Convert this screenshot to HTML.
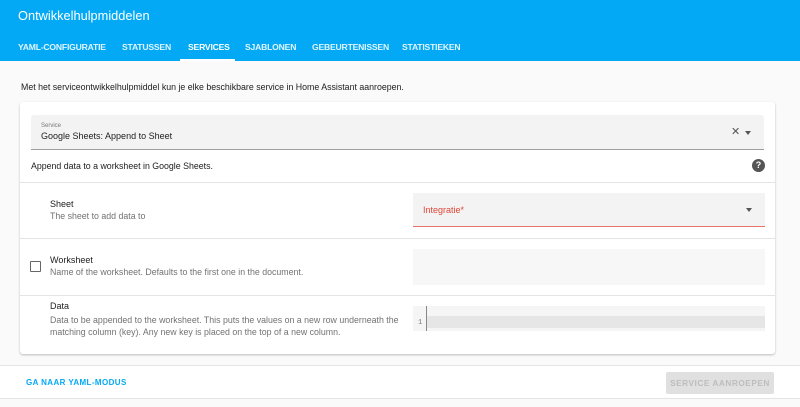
<!DOCTYPE html>
<html><head><style>
*{box-sizing:border-box;margin:0;padding:0}
body{width:800px;height:407px;overflow:hidden;background:#fafafa;font-family:"Liberation Sans",sans-serif;color:#212121;position:relative}
.hdr{position:absolute;left:0;top:0;width:800px;height:61px;background:#03a9f4;color:#fff}
.title{position:absolute;left:18px;top:8px;font-size:12.8px}
.tab{position:absolute;top:42px;font-size:8.6px;font-weight:bold;color:#e1f5fe;letter-spacing:-.2px}
.tab.a{color:#fff}
.ul{position:absolute;left:180px;top:59px;width:55px;height:2px;background:#fff}
.ab{position:absolute}
.card{position:absolute;left:20px;top:102px;width:755px;height:252px;background:#fff;border-radius:3px;box-shadow:0 1px 2px rgba(0,0,0,.25)}
.hr{position:absolute;left:0;width:755px;height:1px;background:#e4e4e4}
.lbl{position:absolute;font-size:9px}
.sub{position:absolute;font-size:8.8px;color:#727272;line-height:12px}
</style></head><body>
<div class="hdr">
<div class="title">Ontwikkelhulpmiddelen</div>
<div class="tab" style="left:18px">YAML-CONFIGURATIE</div>
<div class="tab" style="left:122px">STATUSSEN</div>
<div class="tab a" style="left:188px">SERVICES</div>
<div class="tab" style="left:245px">SJABLONEN</div>
<div class="tab" style="left:312px">GEBEURTENISSEN</div>
<div class="tab" style="left:402px">STATISTIEKEN</div>
<div class="ul"></div>
</div>
<div class="ab" style="left:21px;top:82px;font-size:8.8px">Met het serviceontwikkelhulpmiddel kun je elke beschikbare service in Home Assistant aanroepen.</div>
<div class="card">
 <div class="ab" style="left:11px;top:13px;width:733px;height:35px;background:#f3f3f3;border-bottom:1px solid #9e9e9e;border-radius:3px 3px 0 0">
  <div class="ab" style="left:10px;top:8px;font-size:6px;color:#777">Service</div>
  <div class="ab" style="left:10px;top:16px;font-size:9px">Google Sheets: Append to Sheet</div>
  <div class="ab" style="left:700px;top:10px;font-size:11px;color:#555">✕</div>
  <div class="ab" style="left:714px;top:16px;width:0;height:0;border-left:3.5px solid transparent;border-right:3.5px solid transparent;border-top:4px solid #555"></div>
 </div>
 <div class="ab" style="left:11px;top:59px;font-size:8.8px">Append data to a worksheet in Google Sheets.</div>
 <div class="ab" style="left:732px;top:57px;width:13px;height:13px;border-radius:50%;background:#555;color:#fff;font-size:9px;font-weight:bold;text-align:center;line-height:13px">?</div>
 <div class="hr" style="top:80px"></div>
 <div class="lbl" style="left:30px;top:97px">Sheet</div>
 <div class="sub" style="left:30px;top:108px">The sheet to add data to</div>
 <div class="ab" style="left:393px;top:91px;width:352px;height:34px;background:#f3f3f3;border-bottom:1px solid #e57368">
  <div class="ab" style="left:10px;top:12px;font-size:9px;color:#e0463a">Integratie*</div>
  <div class="ab" style="left:333px;top:15px;width:0;height:0;border-left:3.5px solid transparent;border-right:3.5px solid transparent;border-top:4px solid #555"></div>
 </div>
 <div class="hr" style="top:136px"></div>
 <div class="ab" style="left:10px;top:159px;width:11px;height:11px;border:1.5px solid #666;border-radius:1px"></div>
 <div class="lbl" style="left:30px;top:153px">Worksheet</div>
 <div class="sub" style="left:30px;top:164px">Name of the worksheet. Defaults to the first one in the document.</div>
 <div class="ab" style="left:393px;top:147px;width:352px;height:36px;background:#f7f7f7"></div>
 <div class="hr" style="top:193px"></div>
 <div class="lbl" style="left:30px;top:199px">Data</div>
 <div class="sub" style="left:30px;top:212px;width:355px">Data to be appended to the worksheet. This puts the values on a new row underneath the matching column (key). Any new key is placed on the top of a new column.</div>
 <div class="ab" style="left:393px;top:204px;width:352px;height:25px;background:#f5f5f5">
  <div class="ab" style="left:13px;top:10px;width:339px;height:12px;background:#e6e6e6"></div>
  <div class="ab" style="left:13px;top:0;width:1px;height:25px;background:#888"></div>
  <div class="ab" style="left:5px;top:13px;font-size:7px;color:#777;font-family:'Liberation Mono',monospace">1</div>
 </div>
</div>
<div class="ab" style="left:0;top:365px;width:800px;height:34px;background:#fff;border-top:1px solid #e4e4e4;border-bottom:1px solid #e4e4e4">
 <div class="ab" style="left:26px;top:12px;font-size:8px;font-weight:bold;color:#03a9f4;letter-spacing:.4px">GA NAAR YAML-MODUS</div>
 <div class="ab" style="left:666px;top:6px;width:108px;height:22px;background:#e0e0e0;border-radius:2px;color:#bdbdbd;font-size:8.3px;font-weight:bold;text-align:center;line-height:22px;letter-spacing:.5px">SERVICE AANROEPEN</div>
</div>
</body></html>
